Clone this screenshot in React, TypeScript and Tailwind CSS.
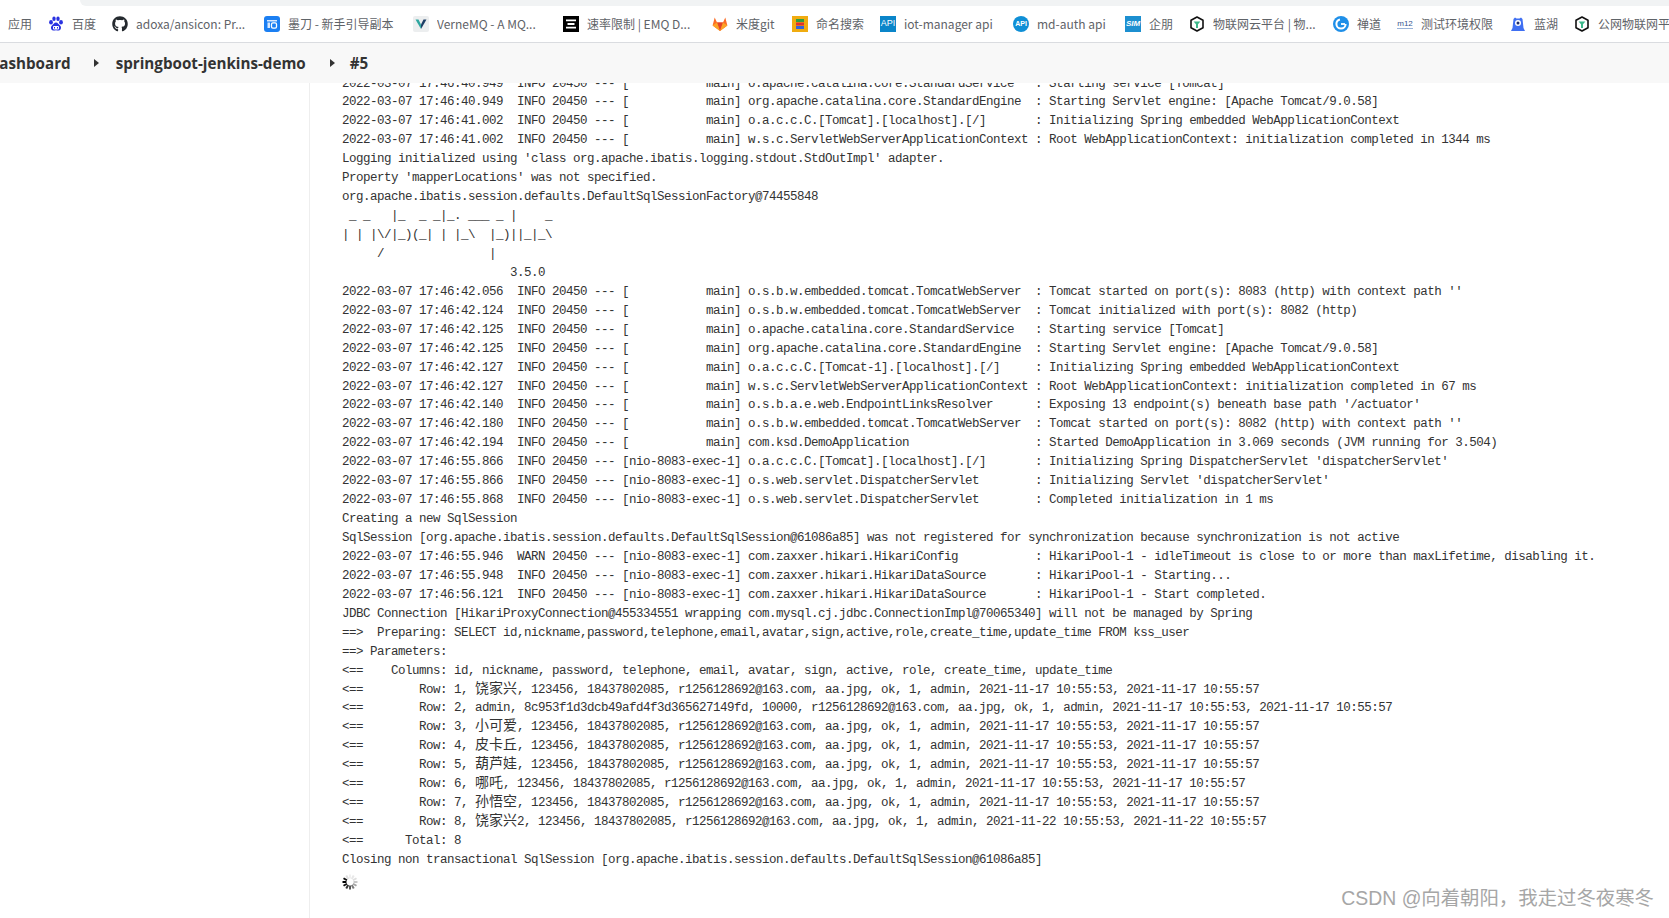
import React from "react";
import { FaGithub } from "react-icons/fa";

const log = (ts: string, level: string, thread: string, logger: string, msg: string) =>
  `2022-03-07 17:46:${ts} ${level.padStart(5)} 20450 --- [${thread.padStart(15)}] ${logger.padEnd(40)} : ${msg}`;

const T1 = "nio-8083-exec-1";

const lines: string[] = [
  log("40.949", "INFO", "main", "o.apache.catalina.core.StandardService", "Starting service [Tomcat]"),
  log("40.949", "INFO", "main", "org.apache.catalina.core.StandardEngine", "Starting Servlet engine: [Apache Tomcat/9.0.58]"),
  log("41.002", "INFO", "main", "o.a.c.c.C.[Tomcat].[localhost].[/]", "Initializing Spring embedded WebApplicationContext"),
  log("41.002", "INFO", "main", "w.s.c.ServletWebServerApplicationContext", "Root WebApplicationContext: initialization completed in 1344 ms"),
  "Logging initialized using 'class org.apache.ibatis.logging.stdout.StdOutImpl' adapter.",
  "Property 'mapperLocations' was not specified.",
  "org.apache.ibatis.session.defaults.DefaultSqlSessionFactory@74455848",
  " _ _   |_  _ _|_. ___ _ |    _",
  "| | |\\/|_)(_| | |_\\  |_)||_|_\\",
  "     /               |",
  "                        3.5.0",
  log("42.056", "INFO", "main", "o.s.b.w.embedded.tomcat.TomcatWebServer", "Tomcat started on port(s): 8083 (http) with context path ''"),
  log("42.124", "INFO", "main", "o.s.b.w.embedded.tomcat.TomcatWebServer", "Tomcat initialized with port(s): 8082 (http)"),
  log("42.125", "INFO", "main", "o.apache.catalina.core.StandardService", "Starting service [Tomcat]"),
  log("42.125", "INFO", "main", "org.apache.catalina.core.StandardEngine", "Starting Servlet engine: [Apache Tomcat/9.0.58]"),
  log("42.127", "INFO", "main", "o.a.c.c.C.[Tomcat-1].[localhost].[/]", "Initializing Spring embedded WebApplicationContext"),
  log("42.127", "INFO", "main", "w.s.c.ServletWebServerApplicationContext", "Root WebApplicationContext: initialization completed in 67 ms"),
  log("42.140", "INFO", "main", "o.s.b.a.e.web.EndpointLinksResolver", "Exposing 13 endpoint(s) beneath base path '/actuator'"),
  log("42.180", "INFO", "main", "o.s.b.w.embedded.tomcat.TomcatWebServer", "Tomcat started on port(s): 8082 (http) with context path ''"),
  log("42.194", "INFO", "main", "com.ksd.DemoApplication", "Started DemoApplication in 3.069 seconds (JVM running for 3.504)"),
  log("55.866", "INFO", T1, "o.a.c.c.C.[Tomcat].[localhost].[/]", "Initializing Spring DispatcherServlet 'dispatcherServlet'"),
  log("55.866", "INFO", T1, "o.s.web.servlet.DispatcherServlet", "Initializing Servlet 'dispatcherServlet'"),
  log("55.868", "INFO", T1, "o.s.web.servlet.DispatcherServlet", "Completed initialization in 1 ms"),
  "Creating a new SqlSession",
  "SqlSession [org.apache.ibatis.session.defaults.DefaultSqlSession@61086a85] was not registered for synchronization because synchronization is not active",
  log("55.946", "WARN", T1, "com.zaxxer.hikari.HikariConfig", "HikariPool-1 - idleTimeout is close to or more than maxLifetime, disabling it."),
  log("55.948", "INFO", T1, "com.zaxxer.hikari.HikariDataSource", "HikariPool-1 - Starting..."),
  log("56.121", "INFO", T1, "com.zaxxer.hikari.HikariDataSource", "HikariPool-1 - Start completed."),
  "JDBC Connection [HikariProxyConnection@455334551 wrapping com.mysql.cj.jdbc.ConnectionImpl@70065340] will not be managed by Spring",
  "==>  Preparing: SELECT id,nickname,password,telephone,email,avatar,sign,active,role,create_time,update_time FROM kss_user",
  "==> Parameters: ",
  "<==    Columns: id, nickname, password, telephone, email, avatar, sign, active, role, create_time, update_time",
  "<==        Row: 1, 饶家兴, 123456, 18437802085, r1256128692@163.com, aa.jpg, ok, 1, admin, 2021-11-17 10:55:53, 2021-11-17 10:55:57",
  "<==        Row: 2, admin, 8c953f1d3dcb49afd4f3d365627149fd, 10000, r1256128692@163.com, aa.jpg, ok, 1, admin, 2021-11-17 10:55:53, 2021-11-17 10:55:57",
  "<==        Row: 3, 小可爱, 123456, 18437802085, r1256128692@163.com, aa.jpg, ok, 1, admin, 2021-11-17 10:55:53, 2021-11-17 10:55:57",
  "<==        Row: 4, 皮卡丘, 123456, 18437802085, r1256128692@163.com, aa.jpg, ok, 1, admin, 2021-11-17 10:55:53, 2021-11-17 10:55:57",
  "<==        Row: 5, 葫芦娃, 123456, 18437802085, r1256128692@163.com, aa.jpg, ok, 1, admin, 2021-11-17 10:55:53, 2021-11-17 10:55:57",
  "<==        Row: 6, 哪吒, 123456, 18437802085, r1256128692@163.com, aa.jpg, ok, 1, admin, 2021-11-17 10:55:53, 2021-11-17 10:55:57",
  "<==        Row: 7, 孙悟空, 123456, 18437802085, r1256128692@163.com, aa.jpg, ok, 1, admin, 2021-11-17 10:55:53, 2021-11-17 10:55:57",
  "<==        Row: 8, 饶家兴2, 123456, 18437802085, r1256128692@163.com, aa.jpg, ok, 1, admin, 2021-11-22 10:55:53, 2021-11-22 10:55:57",
  "<==      Total: 8",
  "Closing non transactional SqlSession [org.apache.ibatis.session.defaults.DefaultSqlSession@61086a85]",
];

function LogLine({ text }: { text: string }) {
  const parts = text.split(/([\u4e00-\u9fff]+)/);
  return (
    <div className="h-[18.95px]">
      {parts.map((p, i) =>
        i % 2 === 1 ? (
          <span key={i} className="text-[14px] leading-[0] tracking-normal font-['Noto_Sans_CJK_SC',monospace]">
            {p}
          </span>
        ) : (
          <span key={i}>{p}</span>
        )
      )}
    </div>
  );
}

const Square = ({ className, children }: { className: string; children?: React.ReactNode }) => (
  <span className={`w-4 h-4 flex items-center justify-center shrink-0 overflow-hidden ${className}`}>{children}</span>
);

const HexIcon = () => (
  <svg width="16" height="16" viewBox="0 0 16 16" className="shrink-0">
    <path d="M8 1 14 4.2V11.8L8 15 2 11.8V4.2Z" fill="#fff" stroke="#111" strokeWidth="1.6" strokeLinejoin="round" />
    <path d="M4.6 5.6h6.8L9 8.2V12H7V8.2Z" fill="#3db88b" />
  </svg>
);

const Baidu = () => (
  <svg width="16" height="16" viewBox="0 0 16 16" className="shrink-0">
    <g fill="#2932e1">
      <ellipse cx="3" cy="6.2" rx="1.9" ry="2.3" />
      <ellipse cx="6" cy="2.8" rx="1.7" ry="2.3" />
      <ellipse cx="10" cy="2.8" rx="1.7" ry="2.3" />
      <ellipse cx="13" cy="6.2" rx="1.9" ry="2.3" />
      <path d="M8 6.5c2 0 2.6 2 4 3 1.6 1.2 1.4 4.6-1.2 5-1 .1-1.8-.3-2.8-.3s-1.8.4-2.8.3C2.600 14.100 2.400 10.700 4 9.500c1.400-1 2-3 4-3Z" />
    </g>
    <rect x="5" y="10" width="6" height="3.400" rx="1" fill="#fff" />
    <path d="M6 11h1v1.600H6zM9 11h1v1.600H9z" fill="#2932e1" />
  </svg>
);

const Modao = () => (
  <svg width="16" height="16" viewBox="0 0 16 16" className="shrink-0">
    <rect width="16" height="16" rx="3" fill="#1b7ff2" />
    <path d="M3 4h10v1.400H3zM3.500 6.500H6V12H3.500z" fill="#d8e9ff" />
    <rect x="7.500" y="6.800" width="5" height="5.400" rx="1.400" fill="none" stroke="#fff" strokeWidth="1.300" />
  </svg>
);

const Verne = () => (
  <svg width="16" height="16" viewBox="0 0 16 16" className="shrink-0">
    <rect width="16" height="16" rx="2" fill="#eceeef" />
    <path d="M2.500 3.500 8 13 8 8.500 5.500 3.500Z" fill="#2fa6a0" />
    <path d="M13.500 3.500 8 13 8 8.500 10.500 3.500Z" fill="#1d3f66" />
  </svg>
);

const Emq = () => (
  <svg width="16" height="16" viewBox="0 0 16 16" className="shrink-0">
    <rect width="16" height="16" fill="#000" />
    <path d="M3 3.500h10v1.800H3zM4.500 7.100h7v1.800h-7zM3 10.700h10v1.800H3z" fill="#fff" />
  </svg>
);

const Gitlab = () => (
  <svg width="16" height="16" viewBox="0 0 16 16" className="shrink-0">
    <path d="M8 15 .6 9.400 2.700 1.500 5 6.500h6l2.300-5 2.100 7.900Z" fill="#fc6d26" />
    <path d="M8 15 5 6.500h6Z" fill="#e24329" />
    <path d="M.6 9.400 5 6.500 8 15ZM15.400 9.400 11 6.500 8 15Z" fill="#fca326" />
  </svg>
);

const Naming = () => (
  <svg width="16" height="16" viewBox="0 0 16 16" className="shrink-0">
    <rect width="16" height="16" fill="#f0ac10" />
    <rect x="4" y="3" width="8" height="3" fill="#2f9e44" />
    <rect x="4" y="6.500" width="8" height="3" fill="#e03131" />
    <rect x="4" y="10" width="8" height="3" fill="#3463d9" />
  </svg>
);

const Zentao = () => (
  <svg width="16" height="16" viewBox="0 0 16 16" className="shrink-0">
    <circle cx="8" cy="8" r="8" fill="#1f8fe8" />
    <circle cx="8" cy="8" r="4.600" fill="none" stroke="#fff" strokeWidth="2" strokeDasharray="20 9" />
    <path d="M8 8h4" stroke="#fff" strokeWidth="1.800" />
  </svg>
);

const Lanhu = () => (
  <svg width="16" height="16" viewBox="0 0 16 16" className="shrink-0">
    <path d="M3.500 3 5 1.500 6.500 2.600h3L11 1.500 12.500 3 13.500 12 15 15H1L2.500 12Z" fill="#3f6ff2" />
    <circle cx="8" cy="7" r="3" fill="#fff" />
    <circle cx="8" cy="7" r="1.500" fill="#1d2c6b" />
  </svg>
);

const M12 = () => (
  <span className="w-4 h-4 shrink-0 flex flex-col items-center justify-center text-[8px] leading-[8px] text-[#34558f] font-['Liberation_Sans',sans-serif]">
    <span>m12</span>
    <span className="w-4 h-px bg-[#9ab3d8]" />
  </span>
);

const Spinner = () => {
  const ticks = Array.from({ length: 12 }, (_, i) => i);
  const colors = ["#f0f0f0", "#e8e8e8", "#dedede", "#c8c8c8", "#a4a4a4", "#7a7a7a", "#555", "#333", "#111", "#000", "#111", "#e0e0e0"];
  return (
    <svg width="16" height="16" viewBox="0 0 16 16" className="block">
      {ticks.map((i) => (
        <line
          key={i}
          x1="8"
          y1="0.500"
          x2="8"
          y2="4.500"
          stroke={colors[i]}
          strokeWidth="2"
          transform={`rotate(${i * 30} 8 8)`}
        />
      ))}
    </svg>
  );
};

const bookmarks: { icon: React.ReactNode; label: string; w: string }[] = [
  { icon: <Baidu />, label: "百度", w: "w-[24px]" },
  { icon: <FaGithub className="w-4 h-4 shrink-0 text-[#24292e]" />, label: "adoxa/ansicon: Pr...", w: "w-[112px]" },
  { icon: <Modao />, label: "墨刀 - 新手引导副本", w: "w-[109px]" },
  { icon: <Verne />, label: "VerneMQ - A MQ...", w: "w-[110px]" },
  { icon: <Emq />, label: "速率限制 | EMQ D...", w: "w-[109px]" },
  { icon: <Gitlab />, label: "米度git", w: "w-[40px]" },
  { icon: <Naming />, label: "命名搜索", w: "w-[48px]" },
  {
    icon: <Square className="bg-[#0a85c9] text-white text-[9px] font-['Liberation_Sans',sans-serif]">API</Square>,
    label: "iot-manager api",
    w: "w-[93px]",
  },
  {
    icon: <Square className="bg-[#0f8fd6] rounded-full text-white text-[7px] font-bold font-['Liberation_Sans',sans-serif]">API</Square>,
    label: "md-auth api",
    w: "w-[72px]",
  },
  {
    icon: <Square className="bg-[#1c8fd0] text-white text-[8px] font-bold italic font-['Liberation_Sans',sans-serif]">SIM</Square>,
    label: "企朋",
    w: "w-[24px]",
  },
  { icon: <HexIcon />, label: "物联网云平台 | 物...", w: "w-[104px]" },
  { icon: <Zentao />, label: "禅道", w: "w-[24px]" },
  { icon: <M12 />, label: "测试环境权限", w: "w-[73px]" },
  { icon: <Lanhu />, label: "蓝湖", w: "w-[24px]" },
  { icon: <HexIcon />, label: "公网物联网平台", w: "w-[84px]" },
];

const Caret = () => <span className="block w-0 h-0 border-y-[4px] border-y-transparent border-l-[5px] border-l-[#333]" />;

export default function App() {
  return (
    <div className="relative h-screen flex flex-col overflow-hidden bg-white">
      <div className="h-[6px] shrink-0 pl-[80px]">
        <div className="h-full bg-[#f1f3f4] rounded-bl-lg" />
      </div>

      <div className="h-[37px] shrink-0 flex items-center pl-[8px] gap-4 border-b border-[#dadce0] text-[12px] text-[#5f6368] whitespace-nowrap overflow-hidden font-['Noto_Sans_CJK_SC','Noto_Sans',sans-serif]">
        <span className="w-[24px] shrink-0">应用</span>
        {bookmarks.map((b) => (
          <div key={b.label} className="flex items-center gap-2 shrink-0">
            {b.icon}
            <span className={`${b.w} overflow-hidden`}>{b.label}</span>
          </div>
        ))}
      </div>

      <div className="h-[40px] shrink-0 flex items-center bg-[#f8f8f8] text-[15.2px] font-bold text-[#333] font-['Open_Sans',sans-serif] whitespace-nowrap">
        <span className="-ml-[12px]">Dashboard</span>
        <span className="ml-[23px]"><Caret /></span>
        <span className="ml-[17px]">springboot-jenkins-demo</span>
        <span className="ml-[24px]"><Caret /></span>
        <span className="ml-[15px]">#5</span>
      </div>

      <div className="flex-1 flex min-h-0 overflow-hidden">
        <aside className="w-[310px] shrink-0 border-r border-[#eeeeee]" />
        <main className="flex-1 min-w-0 pl-[32px] overflow-hidden">
          <div className="-mt-[8.5px] whitespace-pre text-[12.5px] leading-[19px] tracking-[-0.5px] text-[#333] font-['Liberation_Mono','Noto_Sans_CJK_SC',monospace]">
            {lines.map((l, i) => (
              <LogLine key={i} text={l} />
            ))}
          </div>
          <div className="mt-[4.6px]">
            <Spinner />
          </div>
        </main>
      </div>

      <div className="absolute right-[15px] bottom-[6px] text-[19.4px] leading-[28px] text-[#a6a6a6] font-['Liberation_Sans','Noto_Sans_CJK_SC',sans-serif] whitespace-nowrap">
        CSDN @向着朝阳，我走过冬夜寒冬
      </div>
    </div>
  );
}
